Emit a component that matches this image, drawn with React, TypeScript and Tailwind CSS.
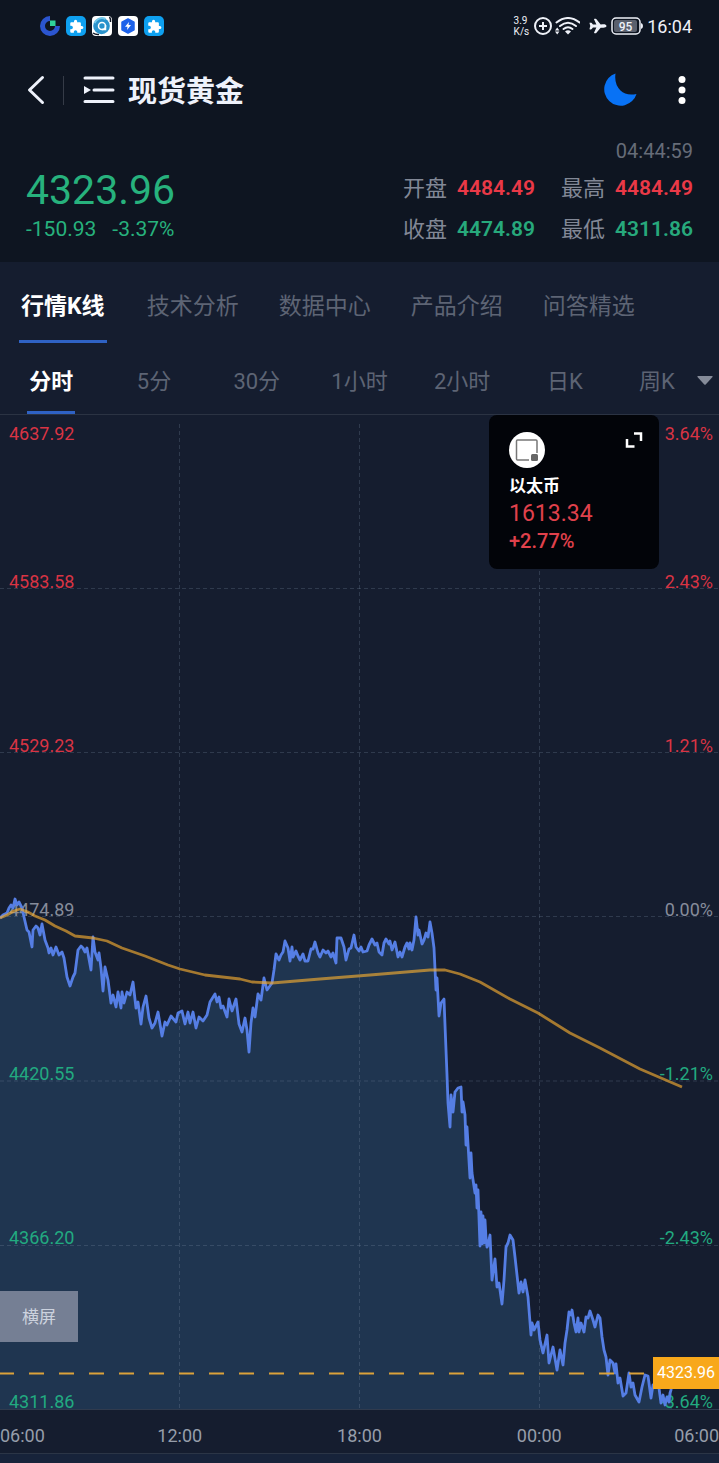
import clsx from 'clsx'
import { IoAirplane } from 'react-icons/io5'
import { MdExtension } from 'react-icons/md'

const PRICE_LINE =
  '0,918 3,915 7,913 9,908 11,905 13,908 15,899 17,905 19,902 22,908 24,917 27,930 29,932 32,947 33,930 36,926 38,928 40,935 42,924 45,940 48,948 49,953 51,948 53,955 56,947 59,955 62,952 64,958 67,977 70,986 73,977 75,973 78,950 81,946 83,948 85,952 87,948 91,970 93,937 95,952 98,960 99,953 101,968 103,991 105,967 108,980 111,1003 113,995 116,1007 118,992 121,1008 122,992 124,1003 127,992 130,995 133,982 136,1008 138,1002 141,1024 143,1007 146,996 149,1018 152,1028 155,1023 158,1012 162,1036 165,1022 167,1025 171,1016 176,1022 178,1013 182,1011 185,1024 188,1012 190,1023 193,1012 196,1028 199,1017 203,1021 207,1015 210,1002 215,994 217,1002 219,997 221,1008 223,1006 227,1017 229,999 232,1011 236,999 239,1024 242,1032 245,1018 247,1030 249,1052 251,1023 253,1008 255,1017 258,994 261,1000 264,978 267,990 272,983 274,970 276,954 279,960 281,955 283,952 285,941 288,948 290,961 292,947 293,957 296,951 298,956 300,960 303,954 305,961 308,961 311,949 313,949 315,942 318,953 320,957 323,950 326,953 328,951 331,957 333,953 336,963 337,938 341,938 344,947 346,960 349,949 351,948 354,935 356,947 359,951 361,947 363,952 367,951 369,945 372,939 375,945 377,943 379,952 382,955 384,943 386,939 389,944 390,941 392,950 395,942 398,957 400,952 402,957 405,947 407,943 409,949 410,943 412,950 414,940 416,917 418,935 419,930 422,944 424,940 426,933 428,937 430,922 432,933 434,948 436,990 437,978 439,1016 441,1003 444,999 445,1025 447,1075 448,1103 450,1127 451,1095 453,1112 455,1092 458,1088 461,1087 462,1112 463,1102 465,1115 466,1145 467,1127 470,1178 471,1153 472,1173 475,1193 476,1185 477,1208 478,1190 480,1246 481,1212 482,1244 483,1216 484,1243 485,1220 486,1238 487,1247 488,1245 490,1235 492,1280 495,1259 497,1287 499,1283 502,1304 504,1280 506,1247 508,1243 510,1235 513,1240 515,1257 519,1293 521,1282 523,1292 525,1280 528,1297 531,1335 532,1323 534,1330 538,1322 540,1340 543,1353 547,1335 549,1363 553,1347 557,1370 560,1350 563,1365 565,1343 567,1330 569,1312 571,1315 572,1310 574,1323 576,1332 578,1318 579,1332 581,1323 584,1332 586,1317 588,1318 590,1311 593,1320 595,1327 598,1315 600,1318 602,1337 604,1350 606,1357 608,1375 610,1360 613,1363 615,1373 616,1364 618,1383 620,1378 623,1396 626,1393 629,1373 631,1387 633,1383 635,1395 639,1402 642,1387 645,1375 648,1376 651,1398 653,1385 659,1388 661,1403 663,1395 665,1405 667,1397 669,1402 670,1393 671,1390 672,1380'

const AVERAGE_LINE =
  '0,918 7,915 14,911 20,909 28,912 35,916 45,920 55,926 66,931 75,936 93,938 107,941 122,948 145,956 168,965 180,969 205,975 240,979 252,982 272,983 320,979 370,975 430,970 445,970 460,974 480,982 510,999 538,1013 570,1033 600,1048 640,1069 682,1087'

const CHART_VIEW_BOX = '0 415 719 995'

const tabs = ['行情K线', '技术分析', '数据中心', '产品介绍', '问答精选']
const periods = ['分时', '5分', '30分', '1小时', '2小时', '日K']

const bands = [
  { price: '4583.58', percent: '2.43%', color: 'text-[#d93444]' },
  { price: '4529.23', percent: '1.21%', color: 'text-[#d93444]' },
  { price: '4474.89', percent: '0.00%', color: 'text-[#868c9b]' },
  { price: '4420.55', percent: '-1.21%', color: 'text-[#22aa80]' },
  { price: '4366.20', percent: '-2.43%', color: 'text-[#22aa80]' },
  { price: '4311.86', percent: '-3.64%', color: 'text-[#22aa80]' },
]

const PuzzleBadge = () => (
  <span className="flex size-5 items-center justify-center rounded-[5px] bg-[#0ea0f0] text-white">
    <MdExtension size={15} />
  </span>
)

const StatusBar = () => (
  <div className="flex h-[52px] items-center justify-between pr-[27px] pl-10 text-[#eef1f8]">
    <div className="flex gap-[6px]">
      <svg className="size-5" viewBox="0 0 20 20" fill="none">
        <path
          d="M10 2.500A7.500 7.500 0 1 0 17.500 10"
          stroke="#2b55d0"
          strokeWidth="5"
        />
        <rect x="10" y="4.500" width="5.500" height="5.500" fill="#2fd39a" />
      </svg>
      <PuzzleBadge />
      <svg className="size-5" viewBox="0 0 20 20" fill="none">
        <rect width="20" height="20" rx="4" fill="#fff" />
        <path
          d="M1 17q3 2 6 1.500M17.500 1q1.500 2 1 5"
          stroke="#111827"
          strokeWidth="1.500"
        />
        <circle cx="9.500" cy="10" r="8.300" fill="#2a93cc" />
        <path d="M2.500 7a8 8 0 0 1 11-4" stroke="#73c8ea" strokeWidth="2" />
        <circle cx="10" cy="10" r="3.500" stroke="#fff" strokeWidth="1.500" />
        <path d="M13.500 9v4.500H10" stroke="#fff" strokeWidth="1.500" />
      </svg>
      <svg className="size-5" viewBox="0 0 20 20">
        <rect width="20" height="20" rx="4" fill="#fff" />
        <path
          d="M10 3l6 3.200v7.600L10 17l-6-3.200V6.200z"
          fill="#1d62ea"
          stroke="#1d62ea"
          strokeWidth="1.500"
          strokeLinejoin="round"
        />
        <path d="M11 6l-4 4.800h2.500L9 14l4-5h-2.500z" fill="#fff" />
      </svg>
      <PuzzleBadge />
    </div>

    <div className="flex items-center">
      <div className="mr-[5px] text-[10px] leading-[11px]">
        <div>3.9</div>
        <div>K/s</div>
      </div>
      <svg className="size-[18px]" viewBox="0 0 18 18" fill="none">
        <circle cx="9" cy="9" r="8" stroke="currentColor" strokeWidth="2" />
        <path d="M9 5v8M5 9h8" stroke="currentColor" strokeWidth="2" />
      </svg>
      <svg
        className="mr-[9px] ml-[3px] h-[18px] w-[25px]"
        viewBox="0 0 25 18"
        fill="none"
      >
        <g stroke="currentColor" strokeWidth="2" strokeLinecap="round">
          <path d="M1.500 5.500Q13 -3.500 24.500 5.500" />
          <path d="M5 9Q13 2.500 21 9" />
          <path d="M8.500 12Q13 8.500 17.500 12" />
        </g>
        <path d="M10 14.500Q13 12 16 14.500L13 17.500z" fill="currentColor" />
        <path
          d="M0 13.500l2.200-3 2.200 3zM0 14.500l2.200 3 2.200-3z"
          fill="currentColor"
        />
      </svg>
      <IoAirplane size={18} />
      <svg className="mx-[4px] h-[18px] w-8" viewBox="0 0 32 18" fill="none">
        <rect
          x="1"
          y="1"
          width="28"
          height="16"
          rx="4"
          stroke="currentColor"
          strokeWidth="1.500"
        />
        <rect x="3" y="3" width="23" height="12" rx="2" fill="#5a606d" />
        <path d="M30 6q2 .5 2 3t-2 3z" fill="currentColor" />
        <text
          x="14.500"
          y="13.500"
          textAnchor="middle"
          fontSize="12"
          fontWeight="500"
          fill="currentColor"
        >
          95
        </text>
      </svg>
      <span className="text-[18px]">16:04</span>
    </div>
  </div>
)

const Header = () => (
  <header className="flex h-[76px] items-center px-[27px] text-[#eef2fb]">
    <button aria-label="返回">
      <svg
        className="h-[30px] w-[18px]"
        viewBox="0 0 18 30"
        fill="none"
        stroke="currentColor"
        strokeWidth="3"
        strokeLinecap="round"
        strokeLinejoin="round"
      >
        <path d="M15.500 2.500L2.500 15l13 12.500" />
      </svg>
    </button>
    <div className="mr-[19px] ml-[18px] h-[29px] w-px bg-[#353b47]" />
    <button aria-label="产品列表">
      <svg className="h-7 w-8" viewBox="0 0 32 28" fill="none">
        <path
          d="M2 2h28M11 14h19M2 25.500h28"
          stroke="currentColor"
          strokeWidth="3"
          strokeLinecap="round"
        />
        <path d="M1 10l7 4-7 4z" fill="currentColor" />
      </svg>
    </button>
    <h1 className="ml-[13px] grow pt-1 text-[29px] leading-9 font-bold">
      现货黄金
    </h1>
    <button aria-label="夜间模式">
      <svg className="size-[34px]" viewBox="0 0 34 34">
        <path
          d="M12.500 .5A16.500 16.500 0 1 0 33.500 21Q23 23 17.500 17.500Q11 11 12.500 .5z"
          fill="#0872f5"
        />
      </svg>
    </button>
    <button aria-label="更多" className="mr-[6px] ml-[41px]">
      <svg className="h-7 w-2" viewBox="0 0 8 28" fill="#fff">
        <circle cx="4" cy="3.500" r="3.500" />
        <circle cx="4" cy="14" r="3.500" />
        <circle cx="4" cy="24.500" r="3.500" />
      </svg>
    </button>
  </header>
)

type StatProps = {
  label: string
  value: string
  rising?: boolean
}

const Stat = ({ label, value, rising }: StatProps) => (
  <div className="flex items-center gap-[10px] text-[22px] leading-[41px]">
    <span className="text-[#828896]">{label}</span>
    <span
      className={clsx(
        'text-[21px] font-semibold',
        rising ? 'text-[#ea3947]' : 'text-[#27a97c]'
      )}
    >
      {value}
    </span>
  </div>
)

const Quote = () => (
  <section className="flex h-[134px] justify-between px-[26px]">
    <div className="pt-[37px] text-[#27b27d]">
      <div className="text-[41px] leading-[50px]">4323.96</div>
      <div className="flex gap-4 text-[21px] leading-7">
        <span>-150.93</span>
        <span>-3.37%</span>
      </div>
    </div>
    <div className="pt-[9px]">
      <div className="pb-[2px] text-right text-[20px] leading-[29px] text-[#666c78]">
        04:44:59
      </div>
      <div className="grid grid-cols-2 gap-x-[26px]">
        <Stat label="开盘" value="4484.49" rising />
        <Stat label="最高" value="4484.49" rising />
        <Stat label="收盘" value="4474.89" />
        <Stat label="最低" value="4311.86" />
      </div>
    </div>
  </section>
)

const Tabs = () => (
  <nav className="flex h-[81px] gap-10 pl-[19px] text-[23px] text-[#5d6474]">
    {tabs.map((tab, i) => (
      <button
        key={tab}
        className={clsx(
          'shrink-0 border-b-3 pt-3',
          i === 0
            ? 'border-[#2f62c4] px-[2px] font-bold text-white'
            : 'border-transparent'
        )}
      >
        {tab}
      </button>
    ))}
  </nav>
)

const Periods = () => (
  <div className="flex h-[72px] border-b border-[#2b3343] text-[22px] text-[#5d6474]">
    {periods.map((period, i) => (
      <button key={period} className="flex w-1/7 justify-center">
        <span
          className={clsx(
            'flex h-full min-w-12 items-center justify-center border-b-3 pt-2',
            i === 0
              ? 'border-[#2f62c4] font-bold text-white'
              : 'border-transparent'
          )}
        >
          {period}
        </span>
      </button>
    ))}
    <button className="flex w-1/7 items-center justify-end gap-[22px] pt-[5px] pr-[6px]">
      周K
      <svg className="h-[10px] w-4" viewBox="0 0 16 10" fill="#858b99">
        <path d="M1 0h14q1 0 .5 1L8.700 8.500q-.7.700-1.400 0L.5 1Q0 0 1 0z" />
      </svg>
    </button>
  </div>
)

const FloatingQuote = () => (
  <aside className="absolute top-0 right-[60px] h-[154px] w-[170px] rounded-lg bg-[#020409] px-5 pt-[17px] text-[#e0414c]">
    <div className="flex items-start justify-between">
      <svg className="size-9" viewBox="0 0 36 36" fill="none">
        <circle cx="18" cy="18" r="18" fill="#fff" />
        <path
          d="M20 28H8.500q-1 0-1-1V9q0-1 1-1H27q1 0 1 1v12"
          stroke="#777"
          strokeWidth="1.500"
        />
        <rect x="22" y="22" width="7" height="7" rx="1.500" fill="#666" />
      </svg>
      <button aria-label="展开" className="-mr-1">
        <svg
          className="h-4 w-[18px]"
          viewBox="0 0 18 16"
          fill="none"
          stroke="#fff"
          strokeWidth="2.500"
        >
          <path d="M9 1.500h7V9M2 7v7.500h7.500" />
        </svg>
      </button>
    </div>
    <div className="pt-1 text-[17px] leading-7 font-bold text-white">以太币</div>
    <div className="text-[23px] leading-[27px]">1613.34</div>
    <div className="text-[20px] leading-7 font-medium">+2.77%</div>
  </aside>
)

const Chart = () => (
  <section className="relative h-[995px] text-[18px]">
    <svg
      className="absolute inset-0 h-full w-full"
      viewBox={CHART_VIEW_BOX}
      preserveAspectRatio="none"
      fill="none"
    >
      <polygon points={`0,1409 ${PRICE_LINE} 672,1409`} fill="#1f3550" />
      <path
        d="M0 588.500H719M0 752.500H719M0 916.500H719M0 1081H719M0 1245.500H719M179.500 424V1409M359.500 424V1409M539.500 424V1409"
        stroke="#8495b0"
        strokeOpacity=".24"
        strokeDasharray="4 3"
      />
      <path d="M0 1409.500H719" stroke="#303b4e" />
    </svg>

    <div className="absolute inset-0 flex flex-col pt-[9px] pr-[6px] pb-[2px] pl-[9px]">
      {bands.map((band, i) => (
        <div key={band.price} className="flex flex-1 flex-col justify-between">
          <div className="flex justify-between leading-5 text-[#d93444]">
            {i === 0 && (
              <>
                <span>4637.92</span>
                <span>3.64%</span>
              </>
            )}
          </div>
          <div
            className={clsx('flex justify-between leading-[12px]', band.color)}
          >
            <span>{band.price}</span>
            <span>{band.percent}</span>
          </div>
        </div>
      ))}
    </div>

    <svg
      className="absolute inset-0 h-full w-full"
      viewBox={CHART_VIEW_BOX}
      preserveAspectRatio="none"
      fill="none"
      strokeLinejoin="round"
    >
      <polyline points={PRICE_LINE} stroke="#557ee4" strokeWidth="2.800" />
      <polyline
        points={AVERAGE_LINE}
        stroke="#f0aa30"
        strokeOpacity=".66"
        strokeWidth="2.800"
      />
      <path
        d="M0 1373.500H653"
        stroke="#dba23a"
        strokeWidth="2"
        strokeDasharray="15 15"
        strokeDashoffset="1"
      />
    </svg>

    <div className="absolute right-0 bottom-[21px] w-[66px] bg-[#f8a81b] text-center text-[16px] leading-8 text-white">
      4323.96
    </div>
    <button className="absolute bottom-[68px] left-0 h-[51px] w-[78px] bg-[#757f94] pt-[2px] text-[17px] text-[#ccd2de]">
      横屏
    </button>
    <FloatingQuote />
  </section>
)

const TimeAxis = () => (
  <div className="flex h-11 items-center border-b border-[#2b3546] pt-2 text-[18px] text-[#969daa]">
    <span className="w-1/8">06:00</span>
    <span className="w-1/4 text-center">12:00</span>
    <span className="w-1/4 text-center">18:00</span>
    <span className="w-1/4 text-center">00:00</span>
    <span className="w-1/8 text-right">06:00</span>
  </div>
)

export default function App() {
  return (
    <div className="flex min-h-screen flex-col overflow-hidden bg-[#151d2f] font-['Roboto','Noto_Sans_CJK_SC',sans-serif]">
      <div className="bg-[#0e1521]">
        <StatusBar />
        <Header />
        <Quote />
      </div>
      <Tabs />
      <Periods />
      <Chart />
      <TimeAxis />
      <div className="grow bg-[#17233a]" />
    </div>
  )
}
